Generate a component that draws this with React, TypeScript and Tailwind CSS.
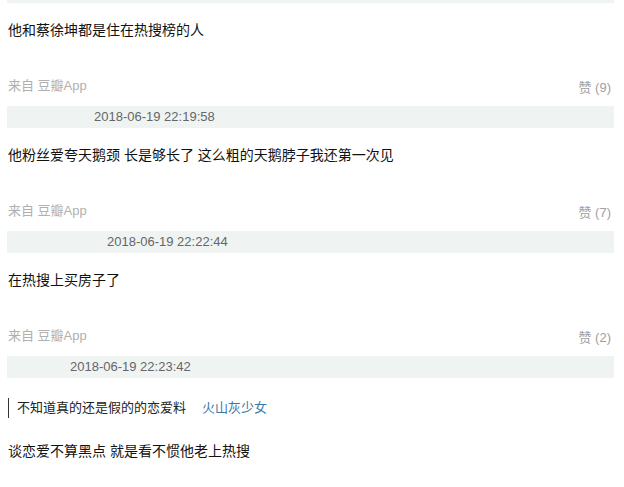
import React from "react";

const font = { fontFamily: '"Liberation Sans", Arial, "Noto Sans CJK SC", sans-serif' };

type C = { text: string; likes: number; date: string; pad: string };

const comments: C[] = [
  { text: "他和蔡徐坤都是住在热搜榜的人", likes: 9, date: "2018-06-19 22:19:58", pad: "pl-[87px]" },
  { text: "他粉丝爱夸天鹅颈 长是够长了 这么粗的天鹅脖子我还第一次见", likes: 7, date: "2018-06-19 22:22:44", pad: "pl-[100px]" },
  { text: "在热搜上买房子了", likes: 2, date: "2018-06-19 22:23:42", pad: "pl-[63px]" },
];

export default function App() {
  return (
    <div className="w-[624px] h-[487px] bg-white overflow-hidden" style={font}>
      <div className="ml-[7px] w-[607px] h-[3px] bg-[#eff4f2]" />
      {comments.map((c, i) => (
        <div key={i} className="flex flex-col">
          <div className="mt-[17px] pl-[8px] h-[20px] leading-[20px] text-[14px] text-[#111]">{c.text}</div>
          <div className="mt-[36px] h-[20px] flex items-center justify-between pl-[8px] pr-[13px]">
            <span className="text-[13px] leading-[20px] text-[#b0b0b0]">来自 豆瓣App</span>
            <span className="text-[13px] leading-[20px] text-[#a0a0a0] pt-[4px]">赞 ({c.likes})</span>
          </div>
          <div className={`mt-[10px] ml-[7px] w-[607px] h-[22px] bg-[#eff4f2] flex items-center ${c.pad}`}>
            <span className="text-[13px] text-[#666] leading-[22px]">{c.date}</span>
          </div>
        </div>
      ))}
      <div className="mt-[20px] ml-[8px] h-[20px] flex items-center">
        <div className="w-[1px] h-[20px] bg-[#333]" />
        <span className="ml-[8px] text-[13px] leading-[20px] text-[#222]">不知道真的还是假的的恋爱料</span>
        <span className="ml-[16px] text-[13px] leading-[20px] text-[#3b77a8]">火山灰少女</span>
      </div>
      <div className="mt-[23px] pl-[8px] h-[20px] leading-[20px] text-[14px] text-[#111]">谈恋爱不算黑点 就是看不惯他老上热搜</div>
    </div>
  );
}
